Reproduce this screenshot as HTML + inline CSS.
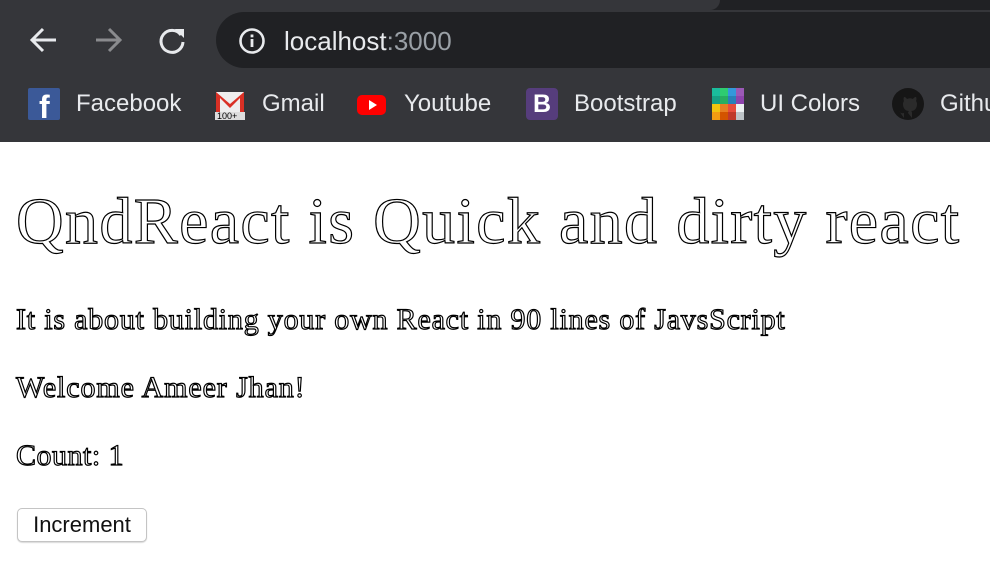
<!DOCTYPE html>
<html><head><meta charset="utf-8"><style>
body{margin:0;width:990px;height:566px;overflow:hidden;background:#fff;font-family:"Liberation Sans",sans-serif;position:relative}
.top{position:absolute;left:0;top:0;width:990px;height:142px;background:#35363a}
.strip{position:absolute;left:0;top:0;width:990px;height:10px;background:#202124}
.tab{position:absolute;left:0;top:0;width:720px;height:10px;background:#35363a;border-bottom-right-radius:10px}
.url{position:absolute;left:216px;top:12px;width:800px;height:56px;border-radius:28px;background:#202124}
.t{position:absolute;color:#e8eaed;font-size:24px;line-height:1}
.s{position:absolute;font-family:"Liberation Serif",serif;color:transparent;-webkit-text-stroke:1.2px #000;white-space:nowrap;line-height:1}
.bm{position:absolute;top:88px;width:32px;height:32px}
button{position:absolute;left:17px;top:508px;width:130px;height:34px;background:#fff;border:1px solid #c4c4c4;border-radius:5px;font-family:"Liberation Sans",sans-serif;font-size:22px;color:#111;box-shadow:0 1px 1px rgba(0,0,0,.15);padding:0}
</style></head><body>
<div class="top"><div class="strip"></div><div class="tab"></div>
<svg style="position:absolute;left:28px;top:25px" width="32" height="30" viewBox="0 0 32 30"><path d="M28 15H5M15 4L4 15l11 11" stroke="#e8eaed" stroke-width="3" fill="none"/></svg>
<svg style="position:absolute;left:92px;top:25px" width="32" height="30" viewBox="0 0 32 30"><path d="M4 15h23M17 4l11 11-11 11" stroke="#8a8b8e" stroke-width="3" fill="none"/></svg>
<svg style="position:absolute;left:156px;top:24px" width="32" height="32" viewBox="0 0 32 32"><path d="M25 11A11 11 0 1 0 27 18" stroke="#e8eaed" stroke-width="3" fill="none"/><path d="M19 5h9v9z" fill="#e8eaed"/></svg>
<div class="url"></div>
<svg style="position:absolute;left:238px;top:27px" width="28" height="28" viewBox="0 0 28 28"><circle cx="14" cy="14" r="11.5" stroke="#e8eaed" stroke-width="2.6" fill="none"/><rect x="12.6" y="12" width="2.8" height="8" fill="#e8eaed"/><rect x="12.6" y="7.5" width="2.8" height="2.8" fill="#e8eaed"/></svg>
<div class="t" style="left:284px;top:28px;font-size:26px">localhost<span style="color:#9aa0a6">:3000</span></div>
<div class="bm" style="left:28px;background:#3b5998;border-radius:2px"><span style="position:absolute;left:11px;top:3px;color:#fff;font-weight:bold;font-size:32px;line-height:1">f</span></div>
<div class="t" style="left:76px;top:92px">Facebook</div>
<svg class="bm" style="left:215px" viewBox="0 0 32 32"><rect x="1" y="4" width="28" height="22" fill="#eee"/><path d="M1 4l14 12 14-12v22h-4V10L15 20 5 10v16H1z" fill="#d93025"/><rect x="0" y="24" width="30" height="8" fill="#ddd"/><text x="2" y="31" font-size="9" font-family="Liberation Sans">100+</text></svg>
<div class="t" style="left:262px;top:92px">Gmail</div>
<svg class="bm" style="left:356px" viewBox="0 0 32 32"><rect x="1" y="7" width="29" height="20" rx="5" fill="#ff0000"/><path d="M13 12v10l8-5z" fill="#fff"/></svg>
<div class="t" style="left:404px;top:92px">Youtube</div>
<div class="bm" style="left:526px;background:#563d7c;border-radius:4px"><span style="position:absolute;left:7px;top:4px;color:#fff;font-weight:bold;font-size:25px;line-height:1">B</span></div>
<div class="t" style="left:574px;top:92px">Bootstrap</div>
<svg class="bm" style="left:712px" viewBox="0 0 32 32"><rect x="0" y="0" width="8" height="8" fill="#1abc9c"/><rect x="8" y="0" width="8" height="8" fill="#2ecc71"/><rect x="16" y="0" width="8" height="8" fill="#3498db"/><rect x="24" y="0" width="8" height="8" fill="#9b59b6"/><rect x="0" y="8" width="8" height="8" fill="#16a085"/><rect x="8" y="8" width="8" height="8" fill="#27ae60"/><rect x="16" y="8" width="8" height="8" fill="#2980b9"/><rect x="24" y="8" width="8" height="8" fill="#8e44ad"/><rect x="0" y="16" width="8" height="8" fill="#f1c40f"/><rect x="8" y="16" width="8" height="8" fill="#e67e22"/><rect x="16" y="16" width="8" height="8" fill="#e74c3c"/><rect x="24" y="16" width="8" height="8" fill="#ecf0f1"/><rect x="0" y="24" width="8" height="8" fill="#f39c12"/><rect x="8" y="24" width="8" height="8" fill="#d35400"/><rect x="16" y="24" width="8" height="8" fill="#c0392b"/><rect x="24" y="24" width="8" height="8" fill="#bdc3c7"/></svg>
<div class="t" style="left:760px;top:92px">UI Colors</div>
<svg class="bm" style="left:892px" viewBox="0 0 32 32"><circle cx="16" cy="16" r="16" fill="#161616"/><path d="M12 30v-5c-4 1-5-2-5-2M20 30v-5c0-2-1-2-1-2 3 0 6-2 6-7 0-2-1-3-1-3s1-2 0-4c0 0-2 0-3 2-2-1-4-1-6 0-1-2-3-2-3-2-1 2 0 4 0 4s-1 1-1 3c0 5 3 7 6 7 0 0-1 1-1 2" fill="#2b2b2b"/></svg>
<div class="t" style="left:940px;top:92px">Github</div>
</div>
<div class="s" style="left:16px;top:189px;font-size:66px;letter-spacing:1.35px">QndReact is Quick and dirty react</div>
<div class="s" style="left:16px;top:305px;font-size:30px;letter-spacing:0.8px">It is about building your own React in 90 lines of JavsScript</div>
<div class="s" style="left:16px;top:373px;font-size:30px;letter-spacing:0.9px">Welcome Ameer Jhan!</div>
<div class="s" style="left:16px;top:441px;font-size:30px;letter-spacing:0.5px">Count: 1</div>
<button>Increment</button>
</body></html>
